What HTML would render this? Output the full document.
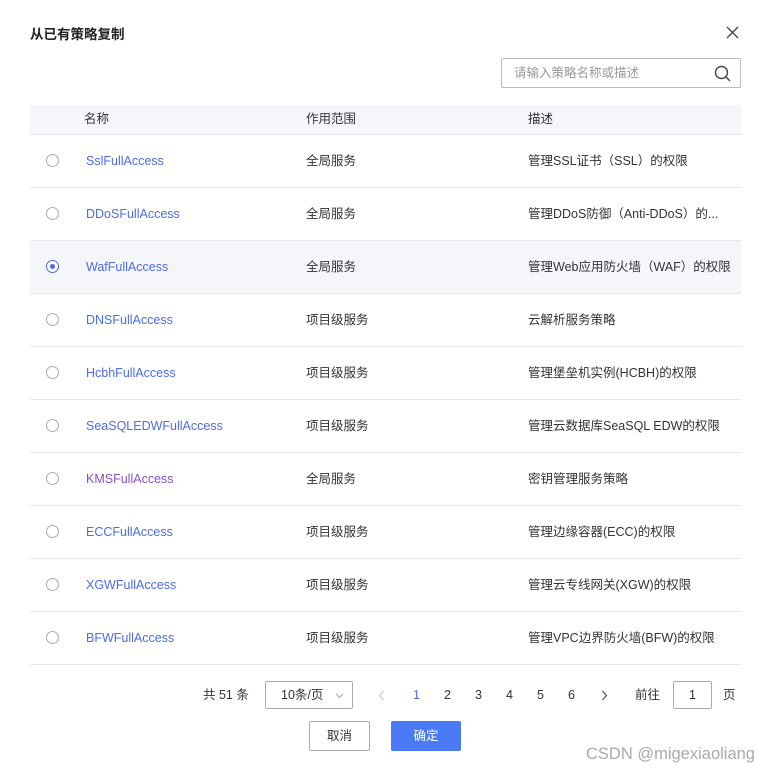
<!DOCTYPE html>
<html><head><meta charset="utf-8"><style>
*{margin:0;padding:0;box-sizing:border-box}
body{width:773px;height:775px;background:#fff;font-family:"Liberation Sans","Noto Sans CJK SC",sans-serif;font-size:12.5px;color:#333;position:relative;overflow:hidden}
.a{position:absolute}
.title{left:30px;top:23px;font-size:13.5px;font-weight:bold;color:#222}
.search{left:501px;top:58px;width:240px;height:30px;border:1px solid #bbb;border-radius:2px}
.search span{position:absolute;left:12px;top:0;line-height:28px;color:#999;font-size:12.5px}
.hdr{left:30px;top:105px;width:711px;height:30px;background:#f5f6f9;border-bottom:1px solid #e6e6e6}
.hdr .c{line-height:29px}
.row{left:30px;width:711px;height:53px;border-bottom:1px solid #e6e6e6}
.row.sel{background:#f5f6fa}
.c{position:absolute;top:0;line-height:52px;white-space:nowrap}
.rad{position:absolute;left:16px;top:50%;margin-top:-7px;width:13px;height:13px;border:1px solid #aaa;border-radius:50%;background:#fff}
.rad.on{border-color:#4a6cf0}
.rad.on:after{content:"";position:absolute;left:3px;top:3px;width:5px;height:5px;border-radius:50%;background:#4a6cf0}
.n{left:56px;color:#4a6cf0}
.s{left:276px}
.d{left:498px}
.pg{top:687px;line-height:16px;font-size:12.5px;color:#333}
.btn{top:721px;height:30px;width:62px;border:1px solid #aaa;border-radius:2px;text-align:center;line-height:28px;font-size:12.5px}
</style></head><body>
<div class="a title">从已有策略复制</div>
<svg class="a" style="left:726px;top:26px" width="13" height="13"><path d="M1 1L12 12M12 1L1 12" stroke="#444" stroke-width="1.3"/></svg>
<div class="a search"><span>请输入策略名称或描述</span>
<svg style="position:absolute;right:9px;top:6px" width="17" height="17"><circle cx="7.5" cy="7.5" r="6" fill="none" stroke="#444" stroke-width="1.4"/><path d="M12 12L16 16" stroke="#444" stroke-width="1.4"/></svg></div>
<div class="a hdr"><span class="c" style="left:54px">名称</span><span class="c" style="left:276px">作用范围</span><span class="c" style="left:498px">描述</span></div>

<div class="a row" style="top:135px"><i class="rad"></i><span class="c n">SslFullAccess</span><span class="c s">全局服务</span><span class="c d">管理SSL证书（SSL）的权限</span></div>
<div class="a row" style="top:188px"><i class="rad"></i><span class="c n">DDoSFullAccess</span><span class="c s">全局服务</span><span class="c d">管理DDoS防御（Anti-DDoS）的...</span></div>
<div class="a row sel" style="top:241px"><i class="rad on"></i><span class="c n">WafFullAccess</span><span class="c s">全局服务</span><span class="c d">管理Web应用防火墙（WAF）的权限</span></div>
<div class="a row" style="top:294px"><i class="rad"></i><span class="c n">DNSFullAccess</span><span class="c s">项目级服务</span><span class="c d">云解析服务策略</span></div>
<div class="a row" style="top:347px"><i class="rad"></i><span class="c n">HcbhFullAccess</span><span class="c s">项目级服务</span><span class="c d">管理堡垒机实例(HCBH)的权限</span></div>
<div class="a row" style="top:400px"><i class="rad"></i><span class="c n">SeaSQLEDWFullAccess</span><span class="c s">项目级服务</span><span class="c d">管理云数据库SeaSQL EDW的权限</span></div>
<div class="a row" style="top:453px"><i class="rad"></i><span class="c n" style="color:#8a4fc8">KMSFullAccess</span><span class="c s">全局服务</span><span class="c d">密钥管理服务策略</span></div>
<div class="a row" style="top:506px"><i class="rad"></i><span class="c n">ECCFullAccess</span><span class="c s">项目级服务</span><span class="c d">管理边缘容器(ECC)的权限</span></div>
<div class="a row" style="top:559px"><i class="rad"></i><span class="c n">XGWFullAccess</span><span class="c s">项目级服务</span><span class="c d">管理云专线网关(XGW)的权限</span></div>
<div class="a row" style="top:612px"><i class="rad"></i><span class="c n">BFWFullAccess</span><span class="c s">项目级服务</span><span class="c d">管理VPC边界防火墙(BFW)的权限</span></div>

<div class="a pg" style="left:203px">共 51 条</div>
<div class="a" style="left:265px;top:681px;width:88px;height:28px;border:1px solid #aaa;border-radius:2px"><span style="position:absolute;left:15px;top:0;line-height:26px">10条/页</span><svg style="position:absolute;left:69px;top:11px" width="9" height="6"><path d="M1 1L4.5 4.5L8 1" fill="none" stroke="#aaa"/></svg></div>
<svg class="a" style="left:378px;top:690px" width="7" height="11"><path d="M5.5 1L1.5 5.5L5.5 10" fill="none" stroke="#ccc" stroke-width="1.2"/></svg>
<div class="a pg" style="left:413px;color:#4a6cf0">1</div>
<div class="a pg" style="left:444px">2</div>
<div class="a pg" style="left:475px">3</div>
<div class="a pg" style="left:506px">4</div>
<div class="a pg" style="left:537px">5</div>
<div class="a pg" style="left:568px">6</div>
<svg class="a" style="left:601px;top:690px" width="7" height="11"><path d="M1.5 1L5.5 5.5L1.5 10" fill="none" stroke="#555" stroke-width="1.2"/></svg>
<div class="a pg" style="left:635px">前往</div>
<div class="a" style="left:673px;top:681px;width:39px;height:28px;border:1px solid #aaa;border-radius:2px;text-align:center;line-height:26px">1</div>
<div class="a pg" style="left:723px">页</div>
<div class="a btn" style="left:309px;width:61px;background:#fff">取消</div>
<div class="a btn" style="left:391px;width:70px;background:#4a7af5;border-color:#4a7af5;color:#fff">确定</div>
<div class="a" style="left:586px;top:745px;font-size:16.5px;color:#aaa">CSDN @migexiaoliang</div>
</body></html>
